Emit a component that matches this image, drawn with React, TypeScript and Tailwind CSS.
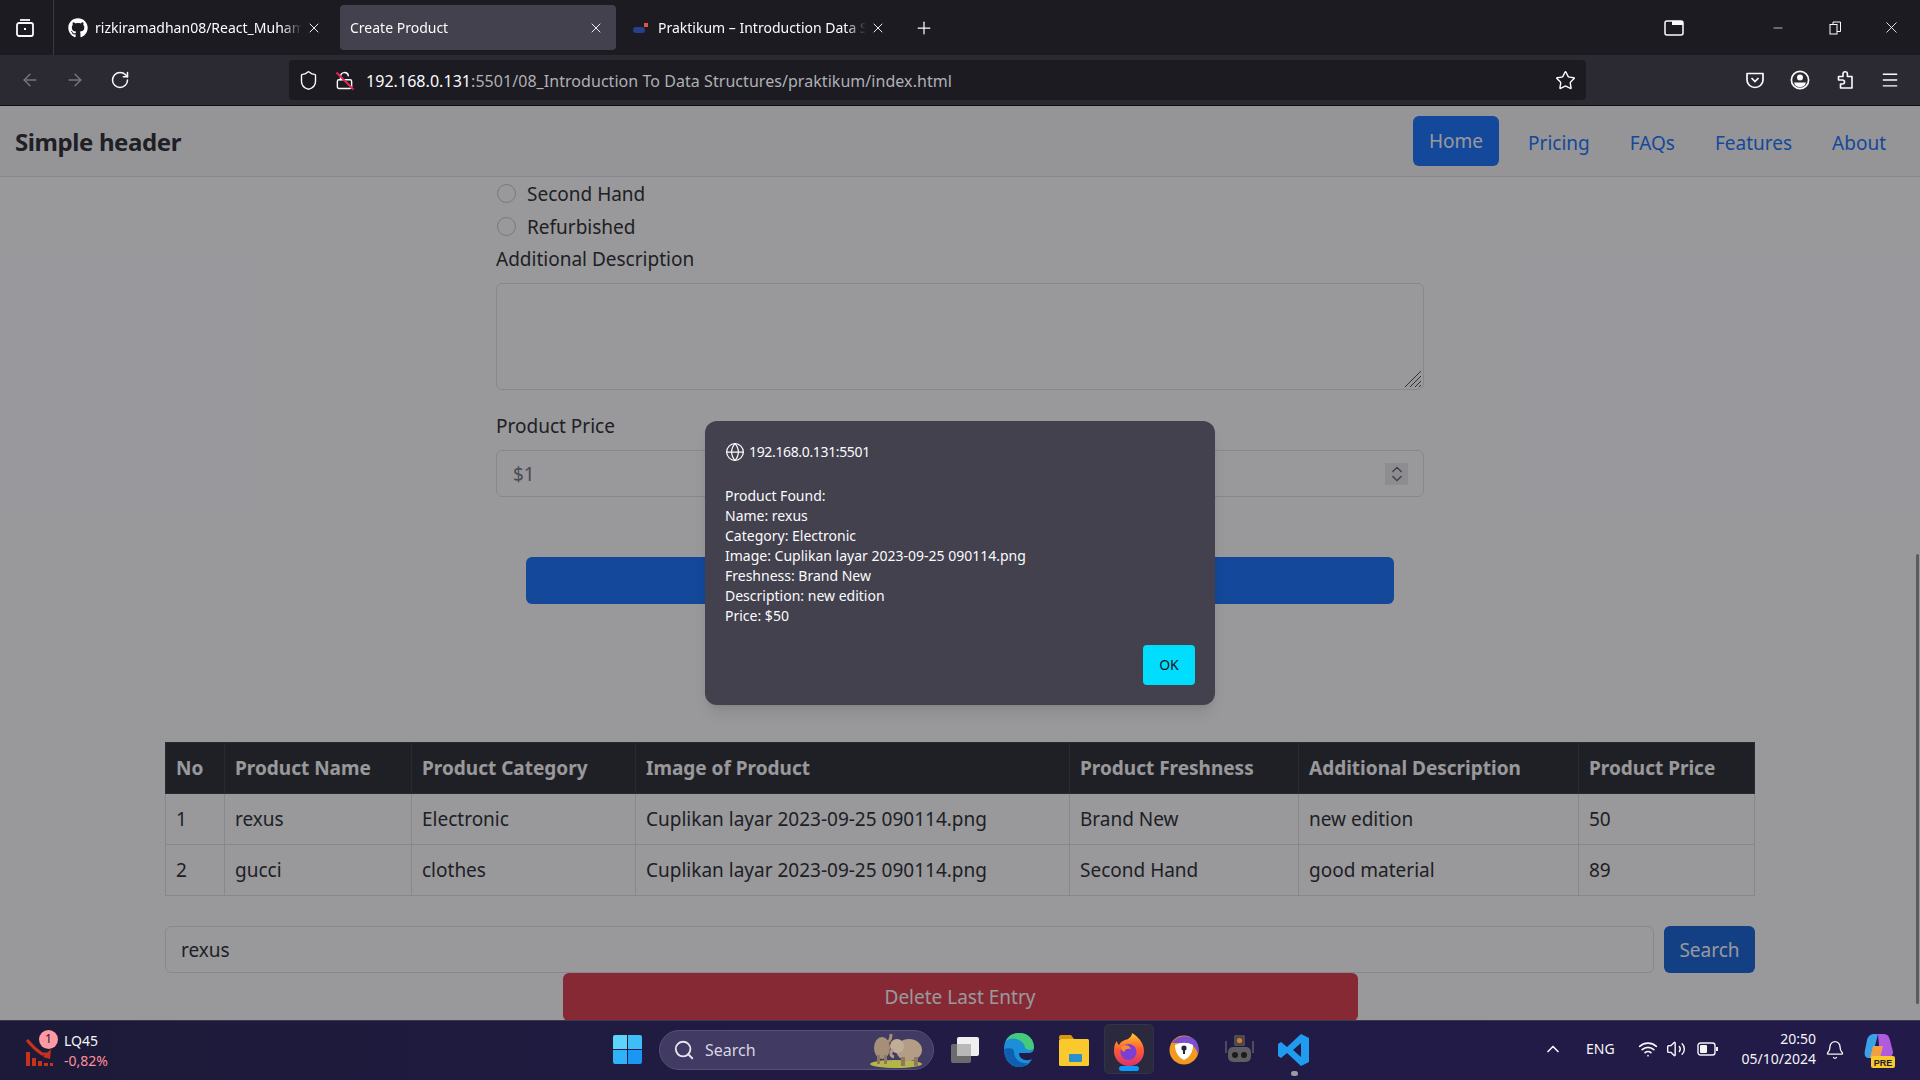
import { useState } from "react";
import { ArrowLeft, ArrowRight, RotateCw, Shield, LockOpen, Star, Menu, X, Plus, Minus, Globe, ChevronUp, ChevronsUpDown, Search, Wifi, Volume2, Bell } from "lucide-react";
import { FaGithub } from "react-icons/fa";

const rows = [
  ["1", "rexus", "Electronic", "Cuplikan layar 2023-09-25 090114.png", "Brand New", "new edition", "50"],
  ["2", "gucci", "clothes", "Cuplikan layar 2023-09-25 090114.png", "Second Hand", "good material", "89"],
];
const heads = ["No", "Product Name", "Product Category", "Image of Product", "Product Freshness", "Additional Description", "Product Price"];
const widths = ["w-[59px]", "w-[187px]", "w-[224px]", "w-[434px]", "w-[229px]", "w-[280px]", "w-[176px]"];

function Tab({ title, icon, active }: { title: string; icon?: React.ReactNode; active?: boolean }) {
  return (
    <div className={`flex h-[45px] w-[276px] shrink-0 items-center rounded-[4px] pl-[10px] pr-[12px] text-[14px] text-[#fbfbfe] ${active ? "bg-[#42414d]" : ""}`}>
      {icon}
      <span className="flex-1 overflow-hidden whitespace-nowrap [mask-image:linear-gradient(to_left,transparent,black_20px)]">{title}</span>
      <X size={16} strokeWidth={1.4} className="ml-1 shrink-0" />
    </div>
  );
}

function NavLink({ label, active }: { label: string; active?: boolean }) {
  return active ? (
    <a className="mr-[9px] flex h-[50px] w-[86px] items-center justify-center rounded-[6px] bg-[#0d6efd] text-white">{label}</a>
  ) : (
    <a className="px-5 pt-[4px] text-[#0d6efd]">{label}</a>
  );
}

function Radio({ label }: { label: string }) {
  return (
    <div className="flex h-[33px] items-center">
      <span className="ml-[1px] mr-[11px] h-[19px] w-[19px] rounded-full border border-[#c4c8cc] bg-white" />
      <span>{label}</span>
    </div>
  );
}

function BrowserChrome() {
  return (
    <div className="shrink-0">
      <div className="flex h-[55px] items-center bg-[#1c1b22]">
        <div className="flex h-[55px] w-[54px] shrink-0 items-center border-r border-[#3a3942] pl-[15px]">
          <svg width="20" height="20" viewBox="0 0 20 20" fill="none" stroke="#fbfbfe" strokeWidth="1.8">
            <rect x="2" y="5" width="16" height="13" rx="2" />
            <path d="M5 2h10" />
            <path d="M9 11h2" strokeWidth="2.2" />
          </svg>
        </div>
        <div className="ml-[4px] flex items-center">
          <div className="w-[282px]">
            <Tab title="rizkiramadhan08/React_Muhammad" icon={<FaGithub size={20} className="mr-[7px] shrink-0 text-white" />} />
          </div>
          <Tab title="Create Product" active />
          <div className="ml-[6px]">
            <Tab
              title="Praktikum – Introduction Data Structures"
              icon={
                <svg width="20" height="14" viewBox="0 0 20 14" className="mr-[6px] shrink-0">
                  <rect x="1" y="6" width="12" height="6" rx="3" fill="#27408b" />
                  <rect x="12" y="2" width="4" height="4" fill="#e2563b" />
                </svg>
              }
            />
          </div>
          <Plus size={20} strokeWidth={1.5} className="ml-[16px] text-[#fbfbfe]" />
        </div>
        <div className="ml-auto flex items-center text-[#fbfbfe]">
          <svg width="20" height="16" viewBox="0 0 20 16" className="mr-[87px]">
            <rect x="1" y="1" width="18" height="14" rx="2" fill="none" stroke="#fbfbfe" strokeWidth="1.5" />
            <rect x="8" y="1" width="11" height="4" fill="#fbfbfe" />
          </svg>
          <Minus size={14} strokeWidth={1.2} className="mr-[44px]" />
          <svg width="13" height="14" viewBox="0 0 13 14" fill="none" stroke="#fbfbfe" className="mr-[40px]">
            <rect x="1" y="3.5" width="7" height="9.5" />
            <path d="M4 3.5V1h7.5v9.5H8" />
          </svg>
          <X size={19} strokeWidth={1.1} className="mr-[19px]" />
        </div>
      </div>
      <div className="flex h-[50px] items-center bg-[#2b2a33] text-[#fbfbfe]">
        <ArrowLeft size={20} strokeWidth={1.6} className="ml-[20px] text-[#77767d]" />
        <ArrowRight size={20} strokeWidth={1.6} className="ml-[25px] text-[#77767d]" />
        <RotateCw size={20} strokeWidth={1.8} className="ml-[25px]" />
        <div className="ml-[159px] flex h-[40px] w-[1297px] items-center rounded-[4px] bg-[#1c1b22] pl-[9px] pr-[10px] text-[16px] tracking-[0.05px]">
          <Shield size={21} strokeWidth={1.6} />
          <span className="relative ml-[16px] mr-[12px]">
            <LockOpen size={19} strokeWidth={1.8} />
            <span className="absolute left-[9px] top-[-2px] h-[24px] w-[2px] -rotate-45 bg-[#e22850]" />
          </span>
          <span className="pt-[2px]">192.168.0.131</span>
          <span className="pt-[2px] text-[#b0b0b5]">:5501/08_Introduction To Data Structures/praktikum/index.html</span>
          <Star size={21} strokeWidth={1.6} className="ml-auto" />
        </div>
        <svg width="20" height="20" viewBox="0 0 20 20" fill="none" stroke="#fbfbfe" strokeWidth="1.7" className="ml-[159px]">
          <path d="M2 3.5h16v6.5c0 4-3.5 7.5-8 7.5S2 14 2 10z" strokeLinejoin="round" />
          <path d="M6.5 8l3.5 3.5L13.5 8" />
        </svg>
        <svg width="20" height="20" viewBox="0 0 20 20" className="ml-[25px]">
          <circle cx="10" cy="10" r="8.6" fill="none" stroke="#fbfbfe" strokeWidth="1.7" />
          <circle cx="10" cy="7.5" r="3" fill="#fbfbfe" />
          <path d="M4 12.5h12a6.2 6.2 0 0 1-12 0z" fill="#fbfbfe" />
        </svg>
        <svg width="20" height="20" viewBox="0 0 20 20" fill="none" stroke="#fbfbfe" strokeWidth="1.6" strokeLinejoin="round" className="ml-[25px]">
          <path d="M8 6.5V4a2.2 2.2 0 0 1 4.4 0v2.5H17V18H5.5v-4H7.5a2 2 0 0 0 0-4H3.5V6.5z" />
        </svg>
        <Menu size={20} strokeWidth={1.7} className="ml-[25px]" />
      </div>
      <div className="h-px bg-[#0c0c0d]" />
    </div>
  );
}

function Page() {
  const [query, setQuery] = useState("rexus");
  return (
    <div className="relative flex-1 overflow-hidden bg-white text-[19px] leading-[30px] text-[#212529]">
      <nav className="flex h-[71px] items-center border-b border-[#dee2e6] bg-[#f8f9fa] pl-[15px] pr-[14px]">
        <span className="pt-[2px] text-[24px] font-bold tracking-[-0.4px]">Simple header</span>
        <div className="ml-auto flex items-center">
          <NavLink label="Home" active />
          <NavLink label="Pricing" />
          <NavLink label="FAQs" />
          <NavLink label="Features" />
          <NavLink label="About" />
        </div>
      </nav>

      <form className="mx-auto w-[928px]">
        <Radio label="Second Hand" />
        <Radio label="Refurbished" />
        <label className="mt-[1px] block">Additional Description</label>
        <div className="relative mt-[9px] h-[107px] rounded-[6px] border border-[#dee2e6] bg-white">
          <textarea readOnly className="block h-full w-full resize-none rounded-[6px]" />
          <svg width="18" height="18" viewBox="0 0 18 18" stroke="#444" strokeWidth="1" className="absolute bottom-[1px] right-[1px]">
            <path d="M1 17L17 1M6 17L17 6M11 17l6-6M15 17l2-2" />
          </svg>
        </div>
        <label className="mt-[21px] block">Product Price</label>
        <div className="mt-[9px] flex h-[47px] items-center rounded-[6px] border border-[#dee2e6] bg-white pl-[16px] pr-[15px] text-[#6c757d]">
          <span>$1</span>
          <span className="ml-auto flex h-[22px] w-[23px] items-center justify-center bg-[#e9e9ed] text-[#555]">
            <ChevronsUpDown size={20} strokeWidth={1.5} />
          </span>
        </div>
        <div className="mx-[30px] mt-[60px] h-[47px] rounded-[6px] bg-[#0d6efd]" />
      </form>

      <div className="mx-auto mt-[138px] w-[1590px]">
        <table className="w-[1589px] table-fixed border-collapse">
          <thead className="bg-[#212529] text-white">
            <tr>
              {heads.map((h, i) => (
                <th key={h} className={`h-[51px] border border-[#32383e] px-[10px] text-left font-bold ${widths[i]}`}>{h}</th>
              ))}
            </tr>
          </thead>
          <tbody>
            {rows.map((r) => (
              <tr key={r[0]}>
                {r.map((c, i) => (
                  <td key={i} className="h-[51px] border border-[#dee2e6] px-[10px]">{c}</td>
                ))}
              </tr>
            ))}
          </tbody>
        </table>
        <div className="mt-[30px] flex gap-[10px]">
          <input
            value={query}
            onChange={(e) => setQuery(e.target.value)}
            className="h-[47px] flex-1 rounded-[6px] border border-[#dee2e6] bg-white px-[15px]"
          />
          <button type="button" className="h-[47px] w-[91px] rounded-[6px] bg-[#0b5ed7] text-white">Search</button>
        </div>
      </div>
      <button type="button" className="mx-auto block h-[48px] w-[795px] rounded-[6px] bg-[#dc3545] text-white">Delete Last Entry</button>

      {/* dim layer behind the alert */}
      <div className="absolute inset-0 bg-[#1c1b22]/45" />
      <div className="absolute right-[1px] top-[448px] h-[450px] w-[3px] rounded-full bg-[#5c5c5e]" />
      <div className="absolute left-[705px] top-[315px] h-[284px] w-[510px] rounded-[12px] bg-[#42414d] px-[20px] pt-[21px] text-[14px] leading-[20px] text-[#fbfbfe] shadow-lg">
        <div className="flex items-center gap-[4px] text-[14px]">
          <Globe size={20} strokeWidth={1.5} />
          <span className="tracking-[-0.35px]">192.168.0.131:5501</span>
        </div>
        <div className="mt-[24px]">
          <p>Product Found:</p>
          <p>Name: rexus</p>
          <p>Category: Electronic</p>
          <p>Image: Cuplikan layar 2023-09-25 090114.png</p>
          <p>Freshness: Brand New</p>
          <p>Description: new edition</p>
          <p>Price: $50</p>
        </div>
        <button type="button" className="absolute bottom-[20px] right-[20px] h-[40px] w-[52px] rounded-[4px] bg-[#00ddff] text-[#15141a]">OK</button>
      </div>
    </div>
  );
}

function Taskbar() {
  return (
    <div className="relative flex h-[60px] shrink-0 items-center border-t border-[#3a3850] bg-gradient-to-r from-[#1c1a38] via-[#221b45] to-[#221a48] text-[#f5f5f7]">
      <div className="ml-[24px] flex items-center">
        <span className="relative h-[32px] w-[37px]">
          <svg width="32" height="32" viewBox="0 0 32 32" className="absolute left-0 top-[0px]">
            <path d="M3 5c4 5 9 10 15 14h7" stroke="#c8321a" strokeWidth="3" fill="none" />
            <path d="M27 14l-1 10-7-2z" fill="#c8321a" />
            <rect x="2" y="17" width="4" height="14" fill="#c8321a" />
            <rect x="8" y="23" width="4" height="8" fill="#c8321a" />
            <rect x="14" y="26" width="4" height="5" fill="#c8321a" />
            <rect x="20" y="28" width="4" height="3" fill="#c8321a" />
            <rect x="26" y="28" width="3" height="3" fill="#c8321a" />
          </svg>
          <span className="absolute left-[15px] top-[-5px] flex h-[19px] w-[19px] items-center justify-center rounded-full bg-[#ff99a4] text-[12px] text-[#1b1a2e]">1</span>
        </span>
        <div className="ml-[3px] text-[14px] leading-[20px]">
          <div>LQ45</div>
          <div className="text-[#ff8f9c]">-0,82%</div>
        </div>
      </div>
      <div className="absolute left-[613px] top-[14px] grid h-[29px] w-[29px] grid-cols-2 gap-[1px]">
        <span className="rounded-tl-[2px] bg-[#5fd4fb]" />
        <span className="rounded-tr-[2px] bg-[#3fbdf9]" />
        <span className="rounded-bl-[2px] bg-[#2fb2f8]" />
        <span className="rounded-br-[2px] bg-[#1a96f5]" />
      </div>
      <div className="absolute left-[659px] top-[9px] flex h-[40px] w-[275px] items-center rounded-full border border-[#55507a] bg-[#413a62] pl-[13px] text-[16px] text-[#d8d6e2]">
        <Search size={22} strokeWidth={2} className="text-[#e6e4ee]" />
        <span className="ml-[10px]">Search</span>
        <svg width="56" height="38" viewBox="0 0 56 38" className="ml-auto mr-[8px]">
          <ellipse cx="27" cy="33" rx="26" ry="4" fill="#b5b64a" />
          <ellipse cx="13" cy="17" rx="8" ry="11" fill="#a58f78" />
          <path d="M15 12c6 0 7-4 7-9" stroke="#a58f78" strokeWidth="3" fill="none" />
          <rect x="8" y="24" width="3" height="9" fill="#8d7864" />
          <rect x="15" y="24" width="3" height="9" fill="#8d7864" />
          <ellipse cx="40" cy="19" rx="13" ry="11" fill="#b39d86" />
          <circle cx="28" cy="15" r="7" fill="#c2ad96" />
          <path d="M24 18c-3 3-3 7 1 8" stroke="#b39d86" strokeWidth="3" fill="none" />
          <rect x="32" y="26" width="4" height="9" fill="#8d7864" />
          <rect x="45" y="26" width="4" height="9" fill="#8d7864" />
        </svg>
      </div>
      <svg width="32" height="30" viewBox="0 0 32 30" className="absolute left-[949px] top-[14px]">
        <rect x="8" y="2" width="22" height="19" rx="2" fill="#efefef" />
        <rect x="2" y="9" width="20" height="19" rx="2" fill="#6b6b6e" />
        <rect x="8" y="9" width="14" height="12" fill="#b8b8b8" />
      </svg>
      <svg width="34" height="36" viewBox="0 0 34 36" className="absolute left-[1001px] top-[11px]">
        <path d="M3 17C3 7 9 1 18 1c9 0 15 6 15 15 0 3-2 5-6 5h-9c0 6 7 9 13 6-3 6-8 8-13 8C9 35 3 27 3 17z" fill="#1c8fd8" />
        <path d="M33 16c0-9-6-15-15-15-6 0-11 3-13 8 4-3 9-3 13-1 4 2 6 5 6 8 3 3 9 2 9 0z" fill="#45c97b" />
        <path d="M13 20c0 7 6 12 14 11-3 3-6 4-9 4C10 35 3 27 3 17c3-1 10-2 10 3z" fill="#0f5fb0" />
      </svg>
      <svg width="34" height="34" viewBox="0 0 34 34" className="absolute left-[1057px] top-[12px]">
        <path d="M2 4a2 2 0 0 1 2-2h10l3 4H2z" fill="#d89a0c" />
        <rect x="2" y="6" width="30" height="27" rx="1.5" fill="#f9c92e" />
        <rect x="12" y="21" width="13" height="8" rx="1" fill="#2a8fd0" />
      </svg>
      <div className="absolute left-[1104px] top-[3px] flex h-[50px] w-[50px] justify-center rounded-[5px] border border-[#34324a] bg-[#2b293d] pt-[8px]">
        <svg width="34" height="34" viewBox="0 0 34 34">
          <defs>
            <linearGradient id="fox" x1="0" y1="0" x2="0" y2="1">
              <stop offset="0" stopColor="#ffca28" />
              <stop offset="0.5" stopColor="#ff5a36" />
              <stop offset="1" stopColor="#d8336e" />
            </linearGradient>
          </defs>
          <path d="M17 33C8 33 2 26 2 18c0-5 1-8 3-10 0 2 1 3 2 4 2-4 6-5 9-6 3-2 4-4 4-6 5 3 12 9 12 18 0 9-7 15-15 15z" fill="url(#fox)" />
          <circle cx="16.5" cy="19" r="8" fill="#7b3fd6" />
          <path d="M9 14c4-3 9-2 10 2-3-1-6 0-7 3-2-1-3-3-3-5z" fill="#ff8a2a" />
        </svg>
        <span className="absolute bottom-[2px] h-[5px] w-[20px] rounded-full bg-[#0a9aff]" />
      </div>
      <svg width="30" height="32" viewBox="0 0 30 32" className="absolute left-[1169px] top-[13px]">
        <circle cx="15" cy="16" r="14.5" fill="#f29a1f" />
        <path d="M3 9C7 2 20-1 27 7c3 5 3 10 2 13-2-7-7-11-13-11-5 0-10 0-13 0z" fill="#7a4fd0" />
        <path d="M6 11c6-3 12-3 18 0 0 7-3 12-9 15-6-3-9-8-9-15z" fill="#fff" />
        <circle cx="15" cy="14" r="2.6" fill="#26233a" />
        <rect x="14" y="15" width="2" height="5" fill="#26233a" />
      </svg>
      <svg width="30" height="30" viewBox="0 0 30 30" className="absolute left-[1224px] top-[13px]">
        <rect x="10" y="1" width="11" height="11" rx="1" fill="#4a4a4f" />
        <circle cx="15.5" cy="6.5" r="2.6" fill="#d9792a" />
        <rect x="4" y="13" width="23" height="15" rx="5" fill="#5d5d62" />
        <circle cx="11" cy="21" r="3" fill="#1c1b22" />
        <circle cx="20" cy="21" r="3" fill="#1c1b22" />
        <path d="M2 7v12M29 7v12" stroke="#5d5d62" strokeWidth="1.5" />
      </svg>
      <svg width="32" height="34" viewBox="0 0 32 34" className="absolute left-[1278px] top-[12px]">
        <path d="M23 1l8 4v24l-8 4-14-13-6 5-3-2V11l3-2 6 5zM23 10l-8 7 8 7z" fill="#1f9cf0" />
      </svg>
      <span className="absolute left-[1291px] top-[50px] h-[5px] w-[7px] rounded-full bg-[#9a9aa2]" />

      <ChevronUp size={20} strokeWidth={2} className="absolute left-[1543px] top-[18px]" />
      <span className="absolute left-[1586px] top-[18px] text-[14px] leading-[20px]">ENG</span>
      <Wifi size={20} strokeWidth={2} className="absolute left-[1638px] top-[18px]" />
      <Volume2 size={20} strokeWidth={1.7} className="absolute left-[1666px] top-[18px]" />
      <svg width="22" height="14" viewBox="0 0 22 14" className="absolute left-[1697px] top-[21px]">
        <rect x="1" y="1" width="17" height="12" rx="2.5" fill="none" stroke="#f5f5f7" strokeWidth="1.4" />
        <rect x="3" y="3" width="7" height="8" rx="1" fill="#f5f5f7" />
        <rect x="19" y="5" width="2" height="4" fill="#f5f5f7" />
      </svg>
      <div className="absolute right-[104px] top-[8px] text-right text-[14px] leading-[20px]">
        <div>20:50</div>
        <div>05/10/2024</div>
      </div>
      <Bell size={20} strokeWidth={1.6} className="absolute left-[1825px] top-[19px]" />
      <svg width="32" height="36" viewBox="0 0 32 36" className="absolute left-[1863px] top-[11px]">
        <path d="M4 8c1-4 4-6 7-6l4 0-6 24H5C2 26 1 22 2 18z" fill="#3aa0e8" />
        <path d="M15 2h6c3 0 5 2 6 6l3 12c0 3-2 6-5 6h-8z" fill="#b05ae0" />
        <path d="M10 14h10l-3 12H7z" fill="#f0a040" />
        <rect x="8" y="24" width="24" height="12" rx="2" fill="#f9c92e" />
        <text x="20" y="33.5" textAnchor="middle" fontSize="9" fontWeight="700" fill="#1c1b22" fontFamily="'Liberation Sans', sans-serif">PRE</text>
      </svg>
    </div>
  );
}

export default function App() {
  return (
    <div className="flex h-[1080px] w-[1920px] flex-col overflow-hidden font-['Noto_Sans',sans-serif]">
      <BrowserChrome />
      <Page />
      <Taskbar />
    </div>
  );
}
